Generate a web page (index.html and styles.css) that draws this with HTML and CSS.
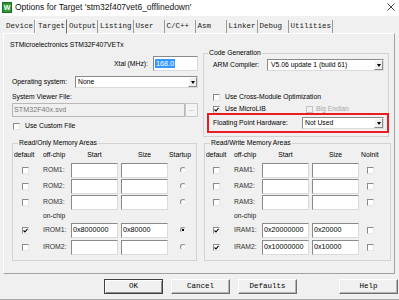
FILE: index.html
```html
<!DOCTYPE html>
<html lang="en">
<head>
  <meta charset="UTF-8">
  <title>Options for Target</title>
  <link rel="stylesheet" href="styles.css">
</head>
<body>

<div class="window">
  <div class="titlebar">
    <span class="app-icon">W</span>
    <span class="title">Options for Target 'stm32f407vet6_offlinedown'</span>
    <svg class="close" width="8" height="8" viewBox="0 0 8 8"><path d="M0.5 0.5 L7.5 7.5 M7.5 0.5 L0.5 7.5" stroke="#444" stroke-width="1"/></svg>
  </div>

  <div class="tabs">
    <span class="tab">Device</span>
    <span class="tab active">Target</span>
    <span class="tab">Output</span>
    <span class="tab">Listing</span>
    <span class="tab">User</span>
    <span class="tab">C/C++</span>
    <span class="tab">Asm</span>
    <span class="tab">Linker</span>
    <span class="tab">Debug</span>
    <span class="tab">Utilities</span>
  </div>

  <div class="panel">
    <!-- left column: device, clock, os, memory (read only) -->
    <div class="col col-left">
      <div class="device">STMicroelectronics STM32F407VETx</div>
      <div class="row xtal">
        <span class="xtal-label">Xtal (MHz):</span>
        <div class="field xtal-field"><span class="selected">168.0</span></div>
      </div>
      <div class="row os">
        <span>Operating system:</span>
        <div class="select os-select"><span>None</span><i class="arrow"></i></div>
      </div>
      <div class="svf-label">System Viewer File:</div>
      <div class="row svd">
        <div class="field disabled">STM32F40x.svd</div>
        <div class="browse">...</div>
      </div>
      <div class="row check custom"><span class="cb"></span><span>Use Custom File</span></div>

      <fieldset class="group mem mem-ro">
        <legend>Read/Only Memory Areas</legend>
        <div class="mem-grid">
          <span class="hd">default</span><span class="hd">off-chip</span><span class="hd mid">Start</span><span class="hd mid">Size</span><span class="hd last">Startup</span>

          <span class="cb"></span><span class="lbl">ROM1:</span><span class="field"></span><span class="field"></span><span class="rb"></span>
          <span class="cb"></span><span class="lbl">ROM2:</span><span class="field"></span><span class="field"></span><span class="rb"></span>
          <span class="cb"></span><span class="lbl">ROM3:</span><span class="field"></span><span class="field"></span><span class="rb"></span>

          <span class="lbl onchip">on-chip</span>

          <span class="cb on"><svg width="5" height="5" viewBox="0 0 5 5"><path d="M0.5 2.5 L2 4 L4.5 0.8" fill="none" stroke="#000" stroke-width="1.1"/></svg></span><span class="lbl">IROM1:</span><span class="field">0x8000000</span><span class="field">0x80000</span><span class="rb on"></span>
          <span class="cb"></span><span class="lbl">IROM2:</span><span class="field"></span><span class="field"></span><span class="rb"></span>
        </div>
      </fieldset>
    </div>

    <!-- right column: code generation, memory (read/write) -->
    <div class="col col-right">
      <fieldset class="group codegen">
        <legend>Code Generation</legend>
        <div class="codegen-body">
          <div class="row arm">
            <span>ARM Compiler:</span>
            <div class="select arm-select"><span>V5.06 update 1 (build 61)</span><i class="arrow"></i></div>
          </div>
          <div class="row check cross"><span class="cb"></span><span>Use Cross-Module Optimization</span></div>
          <div class="row check microlib">
            <div class="check-item lib">
              <span class="cb on"><svg width="5" height="5" viewBox="0 0 5 5"><path d="M0.5 2.5 L2 4 L4.5 0.8" fill="none" stroke="#000" stroke-width="1.1"/></svg></span><span>Use MicroLIB</span>
            </div>
            <div class="check-item off"><span class="cb"></span><span>Big Endian</span></div>
          </div>
          <div class="row fpu">
            <span>Floating Point Hardware:</span>
            <div class="select fpu-select"><span>Not Used</span><i class="arrow"></i></div>
          </div>
        </div>
      </fieldset>

      <fieldset class="group mem mem-rw">
        <legend>Read/Write Memory Areas</legend>
        <div class="mem-grid">
          <span class="hd">default</span><span class="hd">off-chip</span><span class="hd mid">Start</span><span class="hd mid">Size</span><span class="hd last">NoInit</span>

          <span class="cb"></span><span class="lbl">RAM1:</span><span class="field"></span><span class="field"></span><span class="cb end"></span>
          <span class="cb"></span><span class="lbl">RAM2:</span><span class="field"></span><span class="field"></span><span class="cb end"></span>
          <span class="cb"></span><span class="lbl">RAM3:</span><span class="field"></span><span class="field"></span><span class="cb end"></span>

          <span class="lbl onchip">on-chip</span>

          <span class="cb on"><svg width="5" height="5" viewBox="0 0 5 5"><path d="M0.5 2.5 L2 4 L4.5 0.8" fill="none" stroke="#000" stroke-width="1.1"/></svg></span><span class="lbl">IRAM1:</span><span class="field">0x20000000</span><span class="field">0x20000</span><span class="cb end"></span>
          <span class="cb on"><svg width="5" height="5" viewBox="0 0 5 5"><path d="M0.5 2.5 L2 4 L4.5 0.8" fill="none" stroke="#000" stroke-width="1.1"/></svg></span><span class="lbl">IRAM2:</span><span class="field">0x10000000</span><span class="field">0x10000</span><span class="cb end"></span>
        </div>
      </fieldset>
    </div>
  </div>

  <div class="buttons">
    <span class="btn default">OK</span>
    <span class="btn">Cancel</span>
    <span class="btn">Defaults</span>
    <span class="btn help">Help</span>
  </div>
</div>

</body>
</html>
```

FILE: styles.css
```css
* {
  box-sizing: border-box;
}

html, body {
  margin: 0;
}

body {
  width: 399px;
  height: 300px;
  overflow: hidden;
  background: #f0f0f0;
  font-family: "Liberation Sans", Arial, sans-serif;
  font-size: 6.8px;
  line-height: 8px;
  color: #000;
}

.window {
  height: 300px;
  display: flex;
  flex-direction: column;
  border-bottom: 1px solid #a8a8a8;
}

/* Title bar */
.titlebar {
  height: 16px;
  flex-shrink: 0;
  background: #fff;
  display: flex;
  align-items: center;
  padding: 0 4px 2px 2px;
}

.app-icon {
  width: 10px;
  height: 11px;
  background: #2f9a3a;
  border: 1px solid #1e6a26;
  color: #fff;
  font: bold 7px/9px "Liberation Sans", sans-serif;
  text-align: center;
}

.title {
  flex: 1;
  margin-left: 3px;
  font-size: 8.5px;
  line-height: 10px;
  color: #111;
}

/* Tabs */
.tabs {
  height: 17px;
  flex-shrink: 0;
  display: flex;
  align-items: flex-end;
  padding-left: 4px;
  font-family: "Liberation Mono", "DejaVu Sans Mono", monospace;
  font-size: 7.5px;
}

.tab {
  height: 13px;
  line-height: 12px;
  min-width: 31px;
  padding: 0 1px 0 2px;
  border-right: 1px solid #9a9a9a;
  color: #222;
}

.tab.active {
  height: 15px;
  line-height: 13px;
  margin-bottom: -1px;
  border: 1px solid;
  border-color: #fff #6e6e6e transparent #fff;
  background: #f0f0f0;
  position: relative;
  z-index: 1;
}

/* Tab page */
.panel {
  height: 241px;
  flex-shrink: 0;
  margin: 0 4px 0 3px;
  padding-left: 7px;
  display: flex;
  gap: 5px;
  border: 1px solid;
  border-color: #fff #a0a0a0 #a0a0a0 #fff;
}

.col {
  display: flex;
  flex-direction: column;
}

.col-left {
  width: 187px;
}

.col-right {
  width: 188px;
}

.row {
  display: flex;
  align-items: center;
}

.device {
  margin: 7px 0 0 -1px;
}

.xtal {
  margin-top: 8px;
  height: 13px;
  justify-content: flex-end;
}

.xtal-label {
  margin-right: 5px;
}

.xtal-field {
  width: 45px;
  height: 13px;
  padding: 1px;
}

.selected {
  background: #3399ff;
  color: #fff;
  padding: 0 1px;
  line-height: 9px;
  font-size: 7.2px;
}

.os {
  margin-top: 6px;
  height: 12px;
  justify-content: space-between;
  padding-left: 1px;
}

.svf-label {
  margin-top: 5px;
  padding-left: 1px;
}

.svd {
  margin-top: 2px;
  height: 14px;
  padding-left: 1px;
}

.svd .field {
  flex: 1;
  height: 14px;
}

.browse {
  width: 13px;
  height: 14px;
  border: 1px solid #c8c8c8;
  background: #f4f4f4;
  color: #999;
  text-align: center;
  line-height: 10px;
}

.custom {
  margin-top: 5px;
  height: 8px;
  padding-left: 2px;
}

.check .cb {
  margin-right: 5px;
}

/* Fields and controls */
.field {
  display: block;
  height: 15px;
  background: #fff;
  border: 1px solid;
  border-color: #8a8a8a #dadada #dadada #8a8a8a;
  padding-left: 1px;
  font-size: 7.2px;
  line-height: 12px;
  white-space: nowrap;
  overflow: hidden;
}

.field.disabled {
  background: #f0f0f0;
  border-color: #b8b8b8;
  color: #7a7a7a;
}

.select {
  height: 12px;
  display: flex;
  align-items: center;
  background: #fff;
  border: 1px solid;
  border-color: #8a8a8a #dadada #dadada #8a8a8a;
  padding-left: 2px;
}

.select span {
  flex: 1;
  white-space: nowrap;
}

.arrow {
  width: 9px;
  height: 10px;
  background: #f0f0f0;
  border: 1px solid;
  border-color: #fff #8a8a8a #8a8a8a #fff;
  display: flex;
  align-items: center;
  justify-content: center;
}

.arrow::after {
  content: "";
  border-left: 2.5px solid transparent;
  border-right: 2.5px solid transparent;
  border-top: 3px solid #000;
}

.os-select {
  width: 123px;
}

.cb {
  display: inline-flex;
  align-items: center;
  justify-content: center;
  width: 7px;
  height: 7px;
  flex-shrink: 0;
  background: #fff;
  border: 1px solid;
  border-color: #8a8a8a #e6e6e6 #e6e6e6 #8a8a8a;
}

.rb {
  display: block;
  width: 6px;
  height: 6px;
  border-radius: 50%;
  border: 1px solid;
  border-color: #8a8a8a #f0f0f0 #f0f0f0 #8a8a8a;
  background: #fff;
}

.rb.on {
  background: radial-gradient(circle, #000 0 1.3px, #fff 1.6px);
}

/* Group boxes */
.group {
  margin: 0;
  padding: 0;
  min-width: 0;
  border: 1px solid #d2d2d2;
}

.group legend {
  margin-left: 4px;
  padding: 0 1px;
  line-height: 8px;
}

.mem {
  margin-top: 9px;
  padding: 0 0 4px 1px;
}

.mem-ro {
  margin-left: 1px;
  margin-right: 1px;
}

.mem-rw {
  margin-top: 2px;
  margin-left: 1px;
}

.mem-grid {
  display: grid;
  grid-template-columns: 29px 28px 50px 48px 1fr;
  grid-template-rows: 15px 16px 16px 16px 12px 16px 18px;
  align-items: center;
}

.mem-rw .mem-grid {
  grid-template-columns: 28px 28px 50px 48px 1fr;
}

.mem-grid .field {
  width: 47px;
}

.hd {
  white-space: nowrap;
}

.hd.mid {
  width: 47px;
  text-align: center;
}

.mem-rw .hd.last {
  padding-left: 1px;
}

.mem-grid .cb {
  margin-left: 8px;
}

.mem-rw .mem-grid .cb {
  margin-left: 7px;
}

.mem-grid .cb.end {
  margin-left: 7px;
}

.mem-grid .rb {
  margin-left: 11px;
}

.lbl {
  color: #333;
  white-space: nowrap;
}

.onchip {
  grid-column: 2 / -1;
  color: #222;
}

/* Code generation */
.codegen {
  margin-top: 15px;
  margin-right: 2px;
}

.codegen-body {
  padding: 0 4px 3px 9px;
}

.arm {
  margin-top: 2px;
  height: 12px;
  justify-content: space-between;
}

.arm-select {
  width: 117px;
  padding-left: 3px;
}

.cross {
  margin-top: 22px;
  height: 8px;
}

.microlib {
  margin-top: 4px;
  height: 8px;
}

.check-item {
  display: flex;
  align-items: center;
}

.check-item.lib {
  width: 93px;
}

.check-item.off {
  color: #a8a8a8;
}

.check-item.off .cb {
  background: #f0f0f0;
  border-color: #c4c4c4;
  margin-right: 3px;
}

.fpu {
  height: 20px;
  margin: 0 -5px 0 -6px;
  padding: 0 3px 0 4px;
  border: 2px solid #ea1c24;
  justify-content: space-between;
}

.fpu-select {
  width: 82px;
}

/* Dialog buttons */
.buttons {
  display: flex;
  gap: 8px;
  margin-top: 5px;
  padding: 0 1px 0 104px;
}

.btn {
  width: 59px;
  height: 15px;
  font-family: "Liberation Mono", "DejaVu Sans Mono", monospace;
  font-size: 7.5px;
  line-height: 13px;
  text-align: center;
  background: #f0f0f0;
  border: 1px solid;
  border-color: #fff #6e6e6e #6e6e6e #fff;
  box-shadow: inset -1px -1px #b4b4b4;
}

.btn.default {
  border-color: #404040;
  box-shadow: inset 1px 1px #fff, inset -1px -1px #8a8a8a;
}

.btn.help {
  margin-left: auto;
}
```
